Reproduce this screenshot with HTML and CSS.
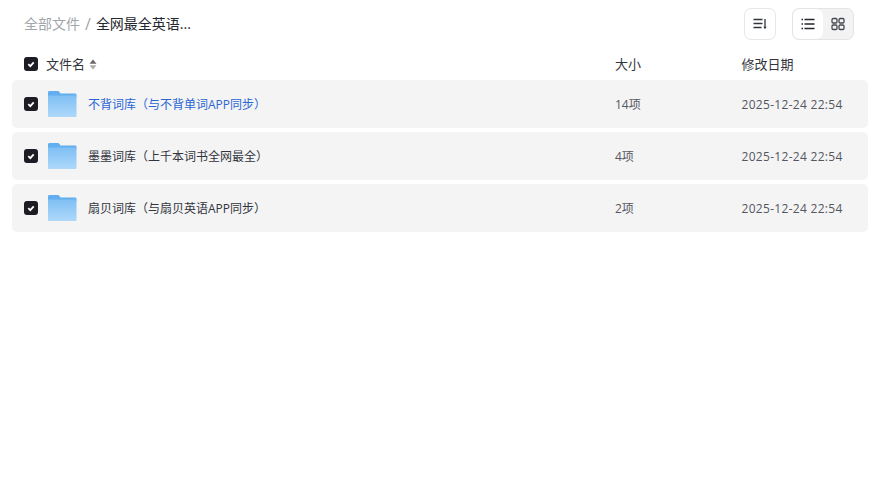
FILE: index.html
```html
<!DOCTYPE html>
<html lang="zh-CN">
<head>
    <meta charset="UTF-8">
    <title>全部文件</title>
    <link rel="stylesheet" href="styles.css">
</head>
<body>
    <div class="toolbar">
        <div class="crumbs">
            <span class="crumb-root">全部文件</span>
            <span class="crumb-sep">/</span>
            <span class="crumb-current">全网最全英语...</span>
        </div>
        <div class="tools">
            <button class="tool-btn">
                <svg width="16" height="16" viewBox="0 0 16 16" fill="none" stroke="#33353d" stroke-width="1.300">
                    <path d="M1.500 3.500h9M1.500 7.500h9M1.500 11.500h8"/>
                    <path d="M13 3v9"/>
                    <path d="M11.400 10.800 13 13.200l1.600-2.400z" fill="#33353d" stroke="none"/>
                </svg>
            </button>
            <div class="view-switch">
                <div class="view-opt active">
                    <svg width="14" height="14" viewBox="0 0 14 14" fill="none" stroke="#25272e" stroke-width="1.300">
                        <path d="M3.500 2.500h10M3.500 7h10M3.500 11.500h10"/>
                        <path d="M.5 2.500h1.500M.5 7h1.500M.5 11.500h1.500"/>
                    </svg>
                </div>
                <div class="view-opt">
                    <svg width="14" height="14" viewBox="0 0 14 14" fill="none" stroke="#45474e" stroke-width="1.300">
                        <rect x="1" y="1.500" width="5" height="4.500" rx="1.200"/>
                        <rect x="8" y="1.500" width="5" height="4.500" rx="1.200"/>
                        <rect x="1" y="8" width="5" height="4.500" rx="1.200"/>
                        <rect x="8" y="8" width="5" height="4.500" rx="1.200"/>
                    </svg>
                </div>
            </div>
        </div>
    </div>

    <div class="head-row">
        <div class="col-name">
            <span class="check"><svg width="10" height="10" viewBox="0 0 10 10"><path d="M2.300 5.200 4.300 7.100 7.700 3.300" fill="none" stroke="#fff" stroke-width="1.800"/></svg></span>
            <span class="head-name">文件名</span>
            <svg class="sort" width="8" height="11" viewBox="0 0 8 11"><path d="M4 .5 7.500 4.800H.5z" fill="#666"/><path d="M4 10.500 .5 6.200h7z" fill="#aaa"/></svg>
        </div>
        <div class="col-size">大小</div>
        <div class="col-date">修改日期</div>
    </div>

    <div class="file-list">
        <div class="file-row">
            <div class="col-name">
                <span class="check"><svg width="10" height="10" viewBox="0 0 10 10"><path d="M2.300 5.200 4.300 7.100 7.700 3.300" fill="none" stroke="#fff" stroke-width="1.800"/></svg></span>
                <svg class="folder" width="30" height="28" viewBox="0 0 30 28"><use href="#folder-icon"/></svg>
                <span class="file-name link">不背词库（与不背单词APP同步）</span>
            </div>
            <div class="col-size">14项</div>
            <div class="col-date">2025-12-24 22:54</div>
        </div>
        <div class="file-row">
            <div class="col-name">
                <span class="check"><svg width="10" height="10" viewBox="0 0 10 10"><path d="M2.300 5.200 4.300 7.100 7.700 3.300" fill="none" stroke="#fff" stroke-width="1.800"/></svg></span>
                <svg class="folder" width="30" height="28" viewBox="0 0 30 28"><use href="#folder-icon"/></svg>
                <span class="file-name">墨墨词库（上千本词书全网最全）</span>
            </div>
            <div class="col-size">4项</div>
            <div class="col-date">2025-12-24 22:54</div>
        </div>
        <div class="file-row">
            <div class="col-name">
                <span class="check"><svg width="10" height="10" viewBox="0 0 10 10"><path d="M2.300 5.200 4.300 7.100 7.700 3.300" fill="none" stroke="#fff" stroke-width="1.800"/></svg></span>
                <svg class="folder" width="30" height="28" viewBox="0 0 30 28"><use href="#folder-icon"/></svg>
                <span class="file-name">扇贝词库（与扇贝英语APP同步）</span>
            </div>
            <div class="col-size">2项</div>
            <div class="col-date">2025-12-24 22:54</div>
        </div>
    </div>

    <svg class="defs" width="0" height="0">
        <defs>
            <linearGradient id="folder-grad" x1="0" y1="0" x2="0" y2="1">
                <stop offset="0" stop-color="#7fbff4"/>
                <stop offset="1" stop-color="#aed8fa"/>
            </linearGradient>
            <symbol id="folder-icon" viewBox="0 0 30 28">
                <path d="M1 2.500C1 1.500 1.600 1 2.500 1h8c1 0 1.500.4 2 1.100L13.500 3.500H28c.8 0 1.500.7 1.500 1.500v2H1z" fill="#62aeee"/>
                <path d="M1 5.500h28.500v20.500c0 .6-.5 1-1 1H2c-.6 0-1-.4-1-1z" fill="url(#folder-grad)"/>
            </symbol>
        </defs>
    </svg>
</body>
</html>
```

FILE: styles.css
```css
body {
    margin: 0;
    padding: 0 10px 0 12px;
    font-family: "Open Sans", "Noto Sans CJK SC", sans-serif;
    font-size: 13px;
    line-height: 20px;
    color: #33353d;
    background: #fff;
}
.toolbar {
    display: flex;
    justify-content: space-between;
    align-items: center;
    height: 48px;
    padding: 0 14px 0 12px;
}
.crumbs {
    display: flex;
    align-items: center;
    gap: 5px;
    margin-top: -1px;
    font-size: 14px;
}
.crumb-root {
    color: #a3a5ac;
}
.crumb-sep {
    color: #a3a5ac;
    font-size: 16px;
}
.crumb-current {
    color: #25272e;
}
.tools {
    display: flex;
    align-items: center;
    gap: 16px;
}
.tool-btn {
    display: flex;
    align-items: center;
    justify-content: center;
    width: 32px;
    height: 32px;
    padding: 0;
    background: #fff;
    border: 1px solid #e6e7ea;
    border-radius: 7px;
}
.view-switch {
    display: flex;
    height: 30px;
    background: #f3f3f4;
    border: 1px solid #e3e4e7;
    border-radius: 7px;
    overflow: hidden;
}
.view-opt {
    display: flex;
    align-items: center;
    justify-content: center;
    width: 30px;
}
.view-opt.active {
    background: #fff;
    border-radius: 7px;
}
.head-row,
.file-row {
    display: flex;
    align-items: center;
}
.head-row {
    height: 32px;
}
.col-name {
    display: flex;
    align-items: center;
    flex: 0 0 603px;
    padding-left: 12px;
    box-sizing: border-box;
}
.col-size {
    flex: 0 0 126.500px;
    color: #55575e;
}
.col-date {
    color: #55575e;
}
.head-row .col-size,
.head-row .col-date,
.head-name {
    color: #33353d;
    margin-top: -1px;
}
.check {
    display: flex;
    align-items: center;
    justify-content: center;
    width: 14px;
    height: 14px;
    background: #1b1c24;
    border-radius: 3px;
}
.head-name {
    margin-left: 8px;
}
.sort {
    margin-left: 4px;
}
.file-list {
    display: flex;
    flex-direction: column;
    gap: 4px;
}
.file-row {
    height: 48px;
    background: #f4f4f5;
    border-radius: 5px;
}
.folder {
    margin-left: 9px;
}
.file-name {
    margin: 1px 0 0 11px;
    font-size: 12px;
    color: #33353d;
}
.file-name.link {
    color: #2a66d4;
}
.file-row .col-size,
.file-row .col-date {
    font-size: 12px;
    margin-top: 1px;
}
.file-row .col-date {
    letter-spacing: 0.3px;
}
.defs {
    position: absolute;
}
```
